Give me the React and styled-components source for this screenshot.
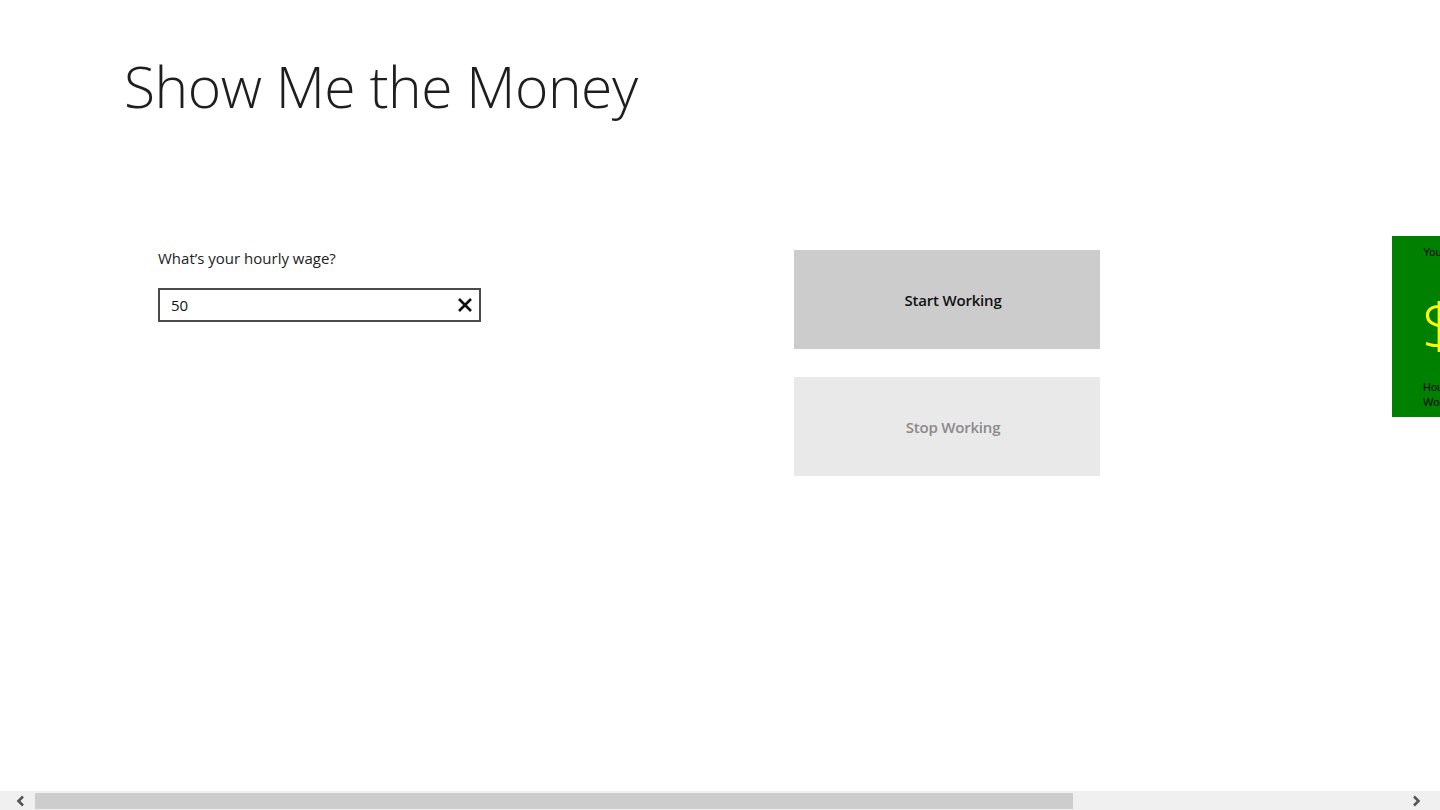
import React from "react";
import styled, { createGlobalStyle } from "styled-components";

const GlobalStyle = createGlobalStyle`
  html, body {
    margin: 0;
    padding: 0;
    background: #fff;
    overflow: hidden;
  }
  body {
    font-family: "Open Sans", "Noto Sans", sans-serif;
    color: #222;
  }
`;

const Page = styled.div`
  width: 1440px;
  height: 810px;
  display: flex;
  flex-direction: column;
  overflow: hidden;
`;

const Viewport = styled.div`
  flex: 1;
  overflow: hidden;
  display: flex;
  flex-direction: column;
`;

const Title = styled.h1`
  margin: 0;
  padding: 46px 0 0 124px;
  font-family: "Open Sans", sans-serif;
  font-weight: 300;
  font-size: 57px;
  line-height: 80px;
  letter-spacing: -0.5px;
  color: #1e1e1e;
`;

const Content = styled.div`
  display: flex;
  align-items: flex-start;
  padding-top: 121px;
`;

const WageSection = styled.section`
  flex-shrink: 0;
  width: 323px;
  margin-left: 158px;
`;

const Label = styled.label`
  display: block;
  font-size: 15px;
  line-height: 22px;
  color: #222;
  margin-bottom: 19px;
`;

const InputBox = styled.div`
  box-sizing: border-box;
  height: 34px;
  display: flex;
  align-items: center;
  border: 2px solid #4a4a4a;
  padding: 0 4px 0 11px;
`;

const Input = styled.input`
  flex: 1;
  min-width: 0;
  border: none;
  outline: none;
  font-family: "Open Sans", sans-serif;
  font-size: 15px;
  color: #111;
  padding: 0;
  background: transparent;
`;

const ClearButton = styled.button`
  border: none;
  background: none;
  padding: 0;
  width: 20px;
  height: 20px;
  display: flex;
  align-items: center;
  justify-content: center;
  cursor: pointer;
`;

const ButtonColumn = styled.div`
  flex-shrink: 0;
  display: flex;
  flex-direction: column;
  gap: 28px;
  margin-left: 313px;
  margin-top: 3px;
`;

const ActionButton = styled.button`
  width: 306px;
  height: 99px;
  border: none;
  padding: 0 0 0 12px;
  background: ${(p) => (p.disabled ? "#e9e9e9" : "#cccccc")};
  color: ${(p) => (p.disabled ? "#8a8a8a" : "#111")};
  font-family: "Open Sans", sans-serif;
  font-size: 15px;
  font-weight: 600;
  letter-spacing: -0.2px;
`;

const TotalPanel = styled.aside`
  flex-shrink: 0;
  width: 220px;
  height: 181px;
  margin-left: 292px;
  margin-top: -11px;
  background: #008000;
  box-sizing: border-box;
  padding: 9px 0 0 31px;
  font-family: "Liberation Sans", Arial, sans-serif;
  color: #000;
  display: flex;
  flex-direction: column;
`;

const SmallText = styled.div`
  font-size: 11px;
  line-height: 15px;
`;

const Dollar = styled.div`
  font-family: "Open Sans", sans-serif;
  font-weight: 300;
  font-size: 62px;
  line-height: 62px;
  color: #ffff00;
  margin: 34px 0 24px -1px;
  white-space: nowrap;
`;

const Scrollbar = styled.div`
  height: 19px;
  background: #f0f0f0;
  display: flex;
  align-items: stretch;
`;

const ArrowButton = styled.div`
  flex-shrink: 0;
  width: ${(p) => p.$width}px;
  box-sizing: border-box;
  padding-left: ${(p) => p.$pad}px;
  display: flex;
  align-items: center;
  justify-content: center;
`;

const Track = styled.div`
  flex: 1;
  display: flex;
  padding: 2px 0 1px;
`;

const Thumb = styled.div`
  width: 1038px;
  background: #cdcdcd;
`;

const Chevron = ({ dir }) => (
  <svg width="12" height="12" viewBox="0 0 12 12">
    <path
      d={dir === "left" ? "M8 1.5 L3.5 6 L8 10.5" : "M4 1.5 L8.5 6 L4 10.5"}
      fill="none"
      stroke="#555"
      strokeWidth="2.6"
    />
  </svg>
);

export default function App() {
  return (
    <Page>
      <GlobalStyle />
      <Viewport>
        <Title>Show Me the Money</Title>
        <Content>
          <WageSection>
            <Label htmlFor="wage">What’s your hourly wage?</Label>
            <InputBox>
              <Input id="wage" defaultValue="50" />
              <ClearButton aria-label="Clear">
                <svg width="16" height="16" viewBox="0 0 16 16">
                  <path d="M2 2 L14 14 M14 2 L2 14" stroke="#111" strokeWidth="2.6" />
                </svg>
              </ClearButton>
            </InputBox>
          </WageSection>
          <ButtonColumn>
            <ActionButton>Start Working</ActionButton>
            <ActionButton disabled>Stop Working</ActionButton>
          </ButtonColumn>
          <TotalPanel>
            <SmallText>You have earned</SmallText>
            <Dollar>$0.00</Dollar>
            <SmallText>Hours</SmallText>
            <SmallText>Worked</SmallText>
          </TotalPanel>
        </Content>
      </Viewport>
      <Scrollbar>
        <ArrowButton $width={35} $pad={6}>
          <Chevron dir="left" />
        </ArrowButton>
        <Track>
          <Thumb />
        </Track>
        <ArrowButton $width={48} $pad={0}>
          <Chevron dir="right" />
        </ArrowButton>
      </Scrollbar>
    </Page>
  );
}
